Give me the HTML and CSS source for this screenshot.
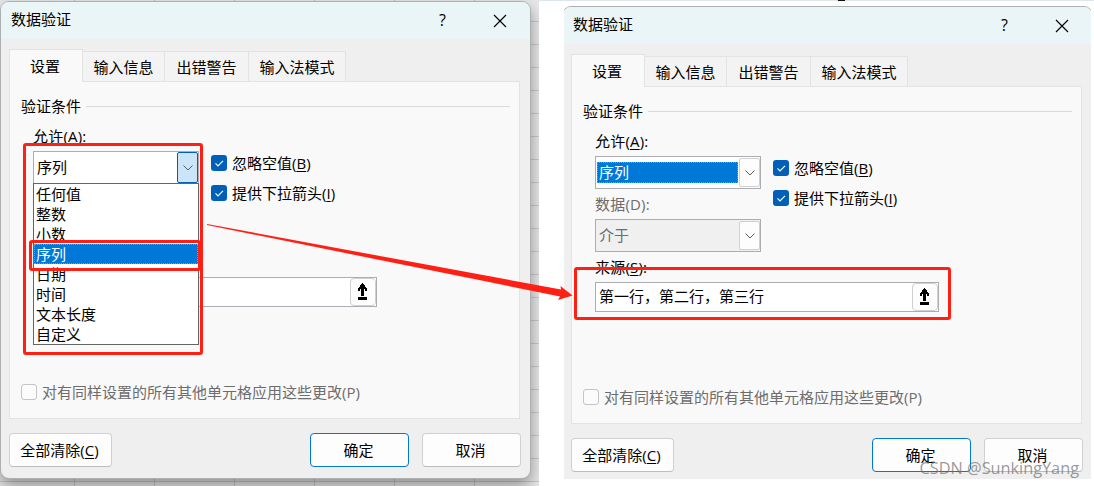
FILE: index.html
```html
<!DOCTYPE html>
<html lang="zh-CN">
<head>
    <meta charset="UTF-8">
    <meta name="viewport" content="width=device-width, initial-scale=1.0">
    <title>数据验证</title>
    <link rel="stylesheet" href="styles.css">
</head>
<body>
    <div class="shot sheet">
        <div class="dialog">
            <div class="title-bar">
                <span class="title">数据验证</span>
                <span class="help">?</span>
                <svg class="close" width="14" height="14" viewBox="0 0 14 14"><path d="M1 1l12 12M13 1L1 13"/></svg>
            </div>
            <div class="tabs">
                <div class="tab active">设置</div>
                <div class="tab">输入信息</div>
                <div class="tab mid">出错警告</div>
                <div class="tab wide">输入法模式</div>
            </div>
            <div class="panel">
                <div class="legend">验证条件</div>
                <div class="fields">
                    <div class="column">
                        <div class="label">允许(<u>A</u>):</div>
                        <div class="combo open">
                            <span class="value">序列</span>
                            <span class="arrow"><svg width="12" height="8" viewBox="0 0 12 8"><path d="M1.500 1.500L6 6l4.500-4.500"/></svg></span>
                            <div class="options">
                                <div>任何值</div>
                                <div>整数</div>
                                <div>小数</div>
                                <div class="selected">序列</div>
                                <div>日期</div>
                                <div>时间</div>
                                <div>文本长度</div>
                                <div>自定义</div>
                            </div>
                        </div>
                    </div>
                    <div class="checks">
                        <div class="check"><span class="box on"><svg width="16" height="16" viewBox="0 0 16 16"><path d="M4.500 8.300l2.500 2.500 5-5"/></svg></span>忽略空值(<u>B</u>)</div>
                        <div class="check"><span class="box on"><svg width="16" height="16" viewBox="0 0 16 16"><path d="M4.500 8.300l2.500 2.500 5-5"/></svg></span>提供下拉箭头(<u>I</u>)</div>
                    </div>
                </div>
                <div class="source">
                    <span class="value"></span>
                    <span class="pick"><svg width="9" height="17" viewBox="0 0 9 17" shape-rendering="crispEdges"><path d="M4 0h1v1h1v1h1v2h1v1h1v3H7V6H6v7H3V6H2v2H0V5h1V4h1V2h1V1h1zM0 14h9v3H0z"/></svg></span>
                </div>
                <div class="check apply disabled"><span class="box"></span>对有同样设置的所有其他单元格应用这些更改(P)</div>
            </div>
            <div class="buttons">
                <div class="button clear">全部清除(<u>C</u>)</div>
                <div class="button primary">确定</div>
                <div class="button">取消</div>
            </div>
        </div>
    </div>

    <div class="shot cropped">
        <div class="dialog">
            <div class="title-bar">
                <span class="title">数据验证</span>
                <span class="help">?</span>
                <svg class="close" width="14" height="14" viewBox="0 0 14 14"><path d="M1 1l12 12M13 1L1 13"/></svg>
            </div>
            <div class="tabs">
                <div class="tab active">设置</div>
                <div class="tab">输入信息</div>
                <div class="tab mid">出错警告</div>
                <div class="tab wide">输入法模式</div>
            </div>
            <div class="panel">
                <div class="legend">验证条件</div>
                <div class="fields">
                    <div class="column">
                        <div class="label">允许(<u>A</u>):</div>
                        <div class="combo">
                            <span class="value focused">序列</span>
                            <span class="arrow"><svg width="12" height="8" viewBox="0 0 12 8"><path d="M1.500 1.500L6 6l4.500-4.500"/></svg></span>
                        </div>
                        <div class="label disabled">数据(D):</div>
                        <div class="combo off">
                            <span class="value">介于</span>
                            <span class="arrow"><svg width="12" height="8" viewBox="0 0 12 8"><path d="M1.500 1.500L6 6l4.500-4.500"/></svg></span>
                        </div>
                        <div class="label">来源(<u>S</u>):</div>
                    </div>
                    <div class="checks">
                        <div class="check"><span class="box on"><svg width="16" height="16" viewBox="0 0 16 16"><path d="M4.500 8.300l2.500 2.500 5-5"/></svg></span>忽略空值(<u>B</u>)</div>
                        <div class="check"><span class="box on"><svg width="16" height="16" viewBox="0 0 16 16"><path d="M4.500 8.300l2.500 2.500 5-5"/></svg></span>提供下拉箭头(<u>I</u>)</div>
                    </div>
                </div>
                <div class="source">
                    <span class="value">第一行，第二行，第三行</span>
                    <span class="pick"><svg width="9" height="17" viewBox="0 0 9 17" shape-rendering="crispEdges"><path d="M4 0h1v1h1v1h1v2h1v1h1v3H7V6H6v7H3V6H2v2H0V5h1V4h1V2h1V1h1zM0 14h9v3H0z"/></svg></span>
                </div>
                <div class="check apply disabled"><span class="box"></span>对有同样设置的所有其他单元格应用这些更改(P)</div>
            </div>
            <div class="buttons">
                <div class="button clear">全部清除(<u>C</u>)</div>
                <div class="button primary">确定</div>
                <div class="button">取消</div>
            </div>
        </div>
    </div>

    <!-- red marks drawn over both dialogs -->
    <svg class="marks" width="1094" height="486" viewBox="0 0 1094 486">
        <rect x="24.500" y="144.500" width="177" height="209" rx="1.500"/>
        <rect x="30.500" y="241.500" width="169" height="28" rx="1.500"/>
        <rect x="575.500" y="268.500" width="374" height="50" rx="1.500"/>
        <path d="M207 224L561 289.500L560.500 286L572.500 295.500L558 300L560 296.500L207 225z"/>
        <path class="speck" d="M838 0h7v1h-7z"/>
    </svg>
    <div class="watermark">CSDN @SunkingYang</div>
</body>
</html>
```
FILE: styles.css
```css
* {
    box-sizing: border-box;
}
body {
    margin: 0;
    width: 1094px;
    height: 486px;
    position: relative;
    display: flex;
    overflow: hidden;
    background: linear-gradient(#dde6ea 1px, #fff 1px);
    color: #000;
    font: 15px/20px "Open Sans", "Noto Sans CJK SC", sans-serif;
    white-space: nowrap;
}
u {
    text-underline-offset: 2px;
    text-decoration-thickness: 1px;
}
.shot {
    overflow: hidden;
}
.sheet {
    width: 539px;
    height: 486px;
    padding-top: 1px;
    background:
        repeating-linear-gradient(transparent 0 21px, #c9c9c9 21px 22px, transparent 22px 23px),
        repeating-linear-gradient(90deg, transparent 0 74px, #c4c4c4 74px 75px, transparent 75px 80px),
        #e8e8e8;
}
.cropped {
    width: 527px;
    height: 473px;
    margin: 6px 0 0 25px;
}
.cropped .dialog {
    margin-left: -2px;
}
.dialog {
    width: 531px;
    height: 478px;
    border: 1px solid #acb0b1;
    border-radius: 9px;
    background: #efefef;
}
.sheet .dialog {
    box-shadow: 0 7px 16px rgba(0, 0, 0, 0.38);
}
.title-bar {
    height: 37px;
    padding: 0 23px 0 10px;
    display: flex;
    align-items: center;
    background: #eaf5f8;
    border-radius: 8px 8px 0 0;
}
.title {
    flex: 1;
    padding-bottom: 3px;
}
.help {
    width: 8px;
    margin-right: 46px;
    padding-bottom: 2px;
    font-size: 16px;
}
.close {
    fill: none;
    stroke: #000;
    stroke-width: 1.2;
}
.tabs {
    height: 42px;
    padding: 10px 0 0 8px;
    display: flex;
    align-items: flex-end;
}
.tab {
    width: 82px;
    height: 30px;
    border: 1px solid #e3e3e3;
    border-left: none;
    border-bottom: none;
    background: #f3f3f3;
    text-align: center;
    line-height: 31px;
}
.tab.active {
    width: 74px;
    height: 33px;
    margin-bottom: -1px;
    padding-right: 2px;
    border-left: 1px solid #e3e3e3;
    background: #f9f9f9;
    line-height: 33px;
    position: relative;
}
.tab.mid {
    width: 84px;
}
.tab.wide {
    width: 97px;
}
.panel {
    width: 511px;
    height: 338px;
    margin-left: 8px;
    padding: 14px 9px 0 11px;
    border: 1px solid #e3e3e3;
    background: #f9f9f9;
    display: flex;
    flex-direction: column;
}
.legend {
    display: flex;
    align-items: center;
    gap: 5px;
}
.legend::after {
    content: "";
    flex: 1;
    height: 1px;
    background: #dadada;
}
.fields {
    height: 161px;
    padding: 10px 0 0 12px;
    display: flex;
    gap: 12px;
}
.label {
    height: 25px;
    letter-spacing: 0.2px;
}
.combo {
    width: 166px;
    height: 33px;
    margin-bottom: 5px;
    padding: 1px 0 1px 1px;
    display: flex;
    border: 1px solid #abadb3;
    background: #fff;
    position: relative;
}
.combo .value {
    flex: 1;
    padding-left: 2px;
    line-height: 29px;
}
.combo .value.focused {
    margin: 4px 1px 4px 0;
    padding-left: 1px;
    border: 1px dotted #c58a5c;
    background: #0078d7;
    color: #fff;
    line-height: 19px;
}
.arrow {
    width: 21px;
    display: flex;
    align-items: center;
    justify-content: center;
    border: 1px solid #d0d0d0;
    border-radius: 2px;
    background: #fdfdfd;
}
.arrow svg {
    fill: none;
    stroke: #5a5a5a;
}
.combo.open .arrow {
    margin: -1px 0;
    border-color: #005fb8;
    background: #cce4f7;
}
.combo.off {
    background: #f0f0f0;
    color: #6d6d6d;
}
.options {
    position: absolute;
    left: -1px;
    top: 31px;
    width: 166px;
    height: 162px;
    border: 1px solid #646464;
    background: #fff;
}
.options div {
    height: 20px;
    padding-left: 2px;
    line-height: 21px;
}
.options .selected {
    padding-left: 1px;
    border: 1px dotted #c58a5c;
    background: #0078d7;
    color: #fff;
    line-height: 19px;
}
.checks {
    padding-top: 27px;
    display: flex;
    flex-direction: column;
    gap: 10px;
}
.check {
    height: 20px;
    display: flex;
    align-items: center;
}
.box {
    width: 16px;
    height: 16px;
    margin-right: 5px;
    border: 1px solid #c4c4c4;
    border-radius: 3px;
    background: #fbfbfb;
}
.box.on {
    border: none;
    background: #005fb8;
}
.box svg {
    display: block;
    fill: none;
    stroke: #fff;
    stroke-width: 1.2;
}
.disabled {
    color: #6d6d6d;
}
.source {
    width: 344px;
    height: 30px;
    margin-left: 12px;
    display: flex;
    border: 1px solid #abadb3;
    background: #fff;
}
.source .value {
    flex: 1;
    padding-left: 3px;
    line-height: 26px;
}
.pick {
    width: 26px;
    padding: 0 1px 1px 0;
    display: flex;
    align-items: center;
    justify-content: center;
    border: 1px solid #d0d0d0;
    border-radius: 4px;
    background: #fdfdfd;
}
.apply {
    margin-top: 75px;
}
.buttons {
    padding: 14px 9px 0 8px;
    display: flex;
}
.button {
    width: 99px;
    height: 34px;
    padding-right: 2px;
    border: 1px solid #d0d0d0;
    border-bottom-color: #bcbcbc;
    border-radius: 4px;
    background: #fdfdfd;
    text-align: center;
    line-height: 33px;
}
.button.clear {
    width: 103px;
    margin-right: auto;
}
.button.primary {
    margin-right: 13px;
    border-color: #0078d4;
}
.marks {
    position: absolute;
    left: 0;
    top: 0;
}
.marks rect {
    fill: none;
    stroke: #ff2015;
    stroke-width: 3;
}
.marks path {
    fill: #ff2015;
}
.marks .speck {
    fill: #111;
}
.watermark {
    position: absolute;
    right: 15px;
    bottom: 8px;
    color: rgba(110, 110, 110, 0.7);
    font-size: 16.3px;
}
```
